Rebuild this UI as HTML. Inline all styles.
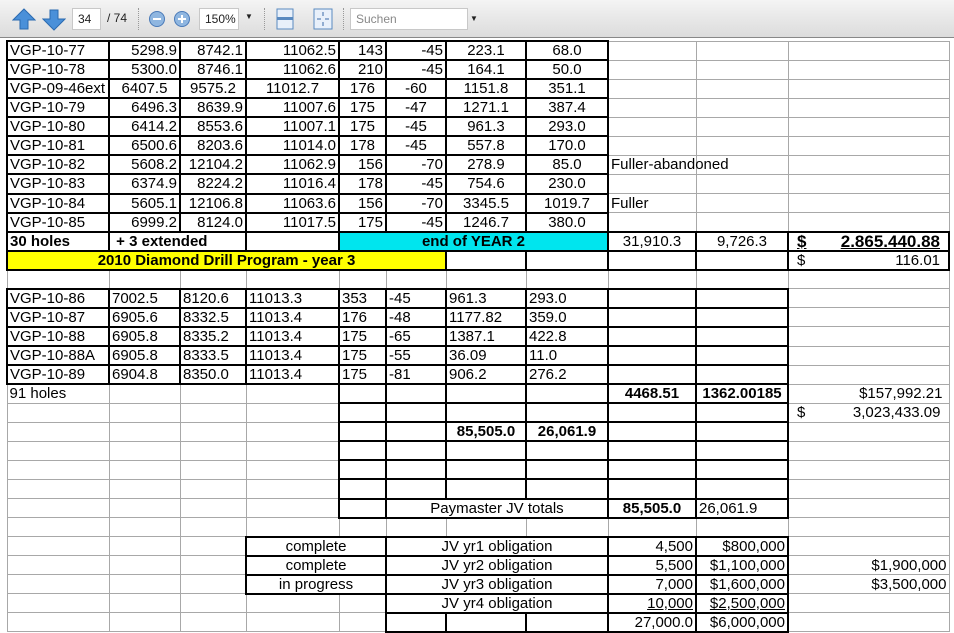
<!DOCTYPE html>
<html><head><meta charset="utf-8"><style>
*{margin:0;padding:0;box-sizing:border-box}
body{width:954px;height:631px;overflow:hidden;background:#fff;font-family:"Liberation Sans",Arial,sans-serif;position:relative}
#tb{position:absolute;left:0;top:0;width:954px;height:38px;background:linear-gradient(#f4f4f4,#dcdcdc);border-bottom:1px solid #888;z-index:5;font-size:12px;color:#222}
#tb .box{position:absolute;top:8px;height:22px;background:#fff;border:1px solid #c8c8c8;line-height:20px;padding-left:5px}
#tb .sep{position:absolute;top:8px;width:2px;height:22px;border-left:1px dotted #999}
table{position:absolute;left:6px;top:40px;width:942px;border-collapse:collapse;table-layout:fixed;font-size:15px;line-height:17px}
td{height:19.07px;border:1px solid #a8a8a8;padding:0 2px;white-space:nowrap;overflow:visible;text-align:left}
td.b{border:2px solid #000}
.r{text-align:right}.c{text-align:center}.bd{font-weight:bold}
.u{text-decoration:underline}
</style></head><body>
<div id="tb">
<svg style="position:absolute;left:12px;top:8px" width="24" height="22"><path d="M12 1 L23 12 L16 12 L16 21 L8 21 L8 12 L1 12 Z" fill="#4a90d9" stroke="#2a6ab0"/></svg>
<svg style="position:absolute;left:42px;top:9px" width="24" height="22"><path d="M12 21 L23 10 L16 10 L16 1 L8 1 L8 10 L1 10 Z" fill="#4a90d9" stroke="#2a6ab0"/></svg>
<div class="box" style="left:72px;width:29px">34</div>
<div style="position:absolute;left:107px;top:11px">/ 74</div>
<div class="sep" style="left:138px"></div>
<svg style="position:absolute;left:148px;top:10px" width="18" height="18"><circle cx="9" cy="9" r="7.5" fill="#8fb6e0" stroke="#4a7ab8"/><rect x="5" y="8" width="8" height="2" fill="#fff"/></svg>
<svg style="position:absolute;left:173px;top:10px" width="18" height="18"><circle cx="9" cy="9" r="7.5" fill="#8fb6e0" stroke="#4a7ab8"/><rect x="5" y="8" width="8" height="2" fill="#fff"/><rect x="8" y="5" width="2" height="8" fill="#fff"/></svg>
<div class="box" style="left:199px;width:40px">150%</div>
<div style="position:absolute;left:245px;top:12px;font-size:8px">▼</div>
<div class="sep" style="left:264px"></div>
<svg style="position:absolute;left:276px;top:8px" width="18" height="22"><rect x="1" y="1" width="16" height="20" fill="#e8f0fa" stroke="#5a8ac0"/><rect x="1" y="9" width="16" height="3" fill="#5a8ac0"/></svg>
<svg style="position:absolute;left:313px;top:8px" width="20" height="22"><rect x="1" y="1" width="18" height="20" fill="#e8f0fa" stroke="#5a8ac0"/><path d="M10 4v4M10 14v4M4 11h4M12 11h4" stroke="#3a6aa8"/></svg>
<div class="sep" style="left:343px"></div>
<div class="box" style="left:350px;width:118px;color:#888">Suchen</div>
<div style="position:absolute;left:470px;top:14px;font-size:8px">▼</div>
</div>
<table>
<colgroup><col style="width:102px"><col style="width:71px"><col style="width:66px"><col style="width:93px"><col style="width:47px"><col style="width:60px"><col style="width:80px"><col style="width:82px"><col style="width:88px"><col style="width:92px"><col style="width:161px"></colgroup>
<tr><td class="b">VGP-10-77</td><td class="b r">5298.9</td><td class="b r">8742.1</td><td class="b r">11062.5</td><td class="b r">143</td><td class="b r">-45</td><td class="b c">223.1</td><td class="b c">68.0</td><td></td><td></td><td></td></tr>
<tr><td class="b">VGP-10-78</td><td class="b r">5300.0</td><td class="b r">8746.1</td><td class="b r">11062.6</td><td class="b r">210</td><td class="b r">-45</td><td class="b c">164.1</td><td class="b c">50.0</td><td></td><td></td><td></td></tr>
<tr><td class="b">VGP-09-46ext</td><td class="b c">6407.5</td><td class="b c">9575.2</td><td class="b c">11012.7</td><td class="b c">176</td><td class="b c">-60</td><td class="b c">1151.8</td><td class="b c">351.1</td><td></td><td></td><td></td></tr>
<tr><td class="b">VGP-10-79</td><td class="b r">6496.3</td><td class="b r">8639.9</td><td class="b r">11007.6</td><td class="b c">175</td><td class="b c">-47</td><td class="b c">1271.1</td><td class="b c">387.4</td><td></td><td></td><td></td></tr>
<tr><td class="b">VGP-10-80</td><td class="b r">6414.2</td><td class="b r">8553.6</td><td class="b r">11007.1</td><td class="b c">175</td><td class="b c">-45</td><td class="b c">961.3</td><td class="b c">293.0</td><td></td><td></td><td></td></tr>
<tr><td class="b">VGP-10-81</td><td class="b r">6500.6</td><td class="b r">8203.6</td><td class="b r">11014.0</td><td class="b c">178</td><td class="b c">-45</td><td class="b c">557.8</td><td class="b c">170.0</td><td></td><td></td><td></td></tr>
<tr><td class="b">VGP-10-82</td><td class="b r">5608.2</td><td class="b r">12104.2</td><td class="b r">11062.9</td><td class="b r">156</td><td class="b r">-70</td><td class="b c">278.9</td><td class="b c">85.0</td><td>Fuller-abandoned</td><td></td><td></td></tr>
<tr><td class="b">VGP-10-83</td><td class="b r">6374.9</td><td class="b r">8224.2</td><td class="b r">11016.4</td><td class="b r">178</td><td class="b r">-45</td><td class="b c">754.6</td><td class="b c">230.0</td><td></td><td></td><td></td></tr>
<tr><td class="b">VGP-10-84</td><td class="b r">5605.1</td><td class="b r">12106.8</td><td class="b r">11063.6</td><td class="b r">156</td><td class="b r">-70</td><td class="b c">3345.5</td><td class="b c">1019.7</td><td>Fuller</td><td></td><td></td></tr>
<tr><td class="b">VGP-10-85</td><td class="b r">6999.2</td><td class="b r">8124.0</td><td class="b r">11017.5</td><td class="b r">175</td><td class="b r">-45</td><td class="b c">1246.7</td><td class="b c">380.0</td><td></td><td></td><td></td></tr>
<tr><td class="b bd">30 holes</td><td class="b bd" colspan="2">&nbsp;+ 3 extended</td><td class="b"></td><td class="b bd c" colspan="4" style="background:#00e5ee">end of YEAR 2</td><td class="b c">31,910.3</td><td class="b c">9,726.3</td><td class="b bd" style="font-size:17px"><span style="float:left;padding-left:6px" class="u">$</span><span style="float:right;padding-right:6px" class="u">2.865.440.88</span></td></tr>
<tr><td class="b bd c" colspan="6" style="background:#ffff00">2010 Diamond Drill Program - year 3</td><td class="b"></td><td class="b"></td><td class="b"></td><td class="b"></td><td class="b"><span style="float:left;padding-left:6px">$</span><span style="float:right;padding-right:6px">116.01</span></td></tr>
<tr><td></td><td></td><td></td><td></td><td></td><td></td><td></td><td></td><td></td><td></td><td></td></tr>
<tr><td class="b">VGP-10-86</td><td class="b">7002.5</td><td class="b">8120.6</td><td class="b">11013.3</td><td class="b">353</td><td class="b">-45</td><td class="b">961.3</td><td class="b">293.0</td><td class="b"></td><td class="b"></td><td></td></tr>
<tr><td class="b">VGP-10-87</td><td class="b">6905.6</td><td class="b">8332.5</td><td class="b">11013.4</td><td class="b">176</td><td class="b">-48</td><td class="b">1177.82</td><td class="b">359.0</td><td class="b"></td><td class="b"></td><td></td></tr>
<tr><td class="b">VGP-10-88</td><td class="b">6905.8</td><td class="b">8335.2</td><td class="b">11013.4</td><td class="b">175</td><td class="b">-65</td><td class="b">1387.1</td><td class="b">422.8</td><td class="b"></td><td class="b"></td><td></td></tr>
<tr><td class="b">VGP-10-88A</td><td class="b">6905.8</td><td class="b">8333.5</td><td class="b">11013.4</td><td class="b">175</td><td class="b">-55</td><td class="b">36.09</td><td class="b">11.0</td><td class="b"></td><td class="b"></td><td></td></tr>
<tr><td class="b">VGP-10-89</td><td class="b">6904.8</td><td class="b">8350.0</td><td class="b">11013.4</td><td class="b">175</td><td class="b">-81</td><td class="b">906.2</td><td class="b">276.2</td><td class="b"></td><td class="b"></td><td></td></tr>
<tr><td>91 holes</td><td></td><td></td><td></td><td class="b"></td><td class="b"></td><td class="b"></td><td class="b"></td><td class="b bd c">4468.51</td><td class="b bd c">1362.00185</td><td class="r" style="padding-right:6px">$157,992.21</td></tr>
<tr><td></td><td></td><td></td><td></td><td class="b"></td><td class="b"></td><td class="b"></td><td class="b"></td><td class="b"></td><td class="b"></td><td><span style="float:left;padding-left:6px">$</span><span style="float:right;padding-right:6px">3,023,433.09</span></td></tr>
<tr><td></td><td></td><td></td><td></td><td class="b"></td><td class="b"></td><td class="b bd c">85,505.0</td><td class="b bd c">26,061.9</td><td class="b"></td><td class="b"></td><td></td></tr>
<tr><td></td><td></td><td></td><td></td><td class="b"></td><td class="b"></td><td class="b"></td><td class="b"></td><td class="b"></td><td class="b"></td><td></td></tr>
<tr><td></td><td></td><td></td><td></td><td class="b"></td><td class="b"></td><td class="b"></td><td class="b"></td><td class="b"></td><td class="b"></td><td></td></tr>
<tr><td></td><td></td><td></td><td></td><td class="b"></td><td class="b"></td><td class="b"></td><td class="b"></td><td class="b"></td><td class="b"></td><td></td></tr>
<tr><td></td><td></td><td></td><td></td><td class="b"></td><td class="b c" colspan="3">Paymaster JV totals</td><td class="b bd c">85,505.0</td><td class="b">26,061.9</td><td></td></tr>
<tr><td></td><td></td><td></td><td></td><td></td><td></td><td></td><td></td><td></td><td></td><td></td></tr>
<tr><td></td><td></td><td></td><td class="b c" colspan="2">complete</td><td class="b c" colspan="3">JV yr1 obligation</td><td class="b r">4,500</td><td class="b r">$800,000</td><td></td></tr>
<tr><td></td><td></td><td></td><td class="b c" colspan="2">complete</td><td class="b c" colspan="3">JV yr2 obligation</td><td class="b r">5,500</td><td class="b r">$1,100,000</td><td class="r">$1,900,000</td></tr>
<tr><td></td><td></td><td></td><td class="b c" colspan="2">in progress</td><td class="b c" colspan="3">JV yr3 obligation</td><td class="b r">7,000</td><td class="b r">$1,600,000</td><td class="r">$3,500,000</td></tr>
<tr><td></td><td></td><td></td><td></td><td></td><td class="b c" colspan="3">JV yr4 obligation</td><td class="b r"><span class="u">10,000</span></td><td class="b r"><span class="u">$2,500,000</span></td><td></td></tr>
<tr><td></td><td></td><td></td><td></td><td></td><td class="b"></td><td class="b"></td><td class="b"></td><td class="b r">27,000.0</td><td class="b r">$6,000,000</td><td></td></tr>
</table>
</body></html>
